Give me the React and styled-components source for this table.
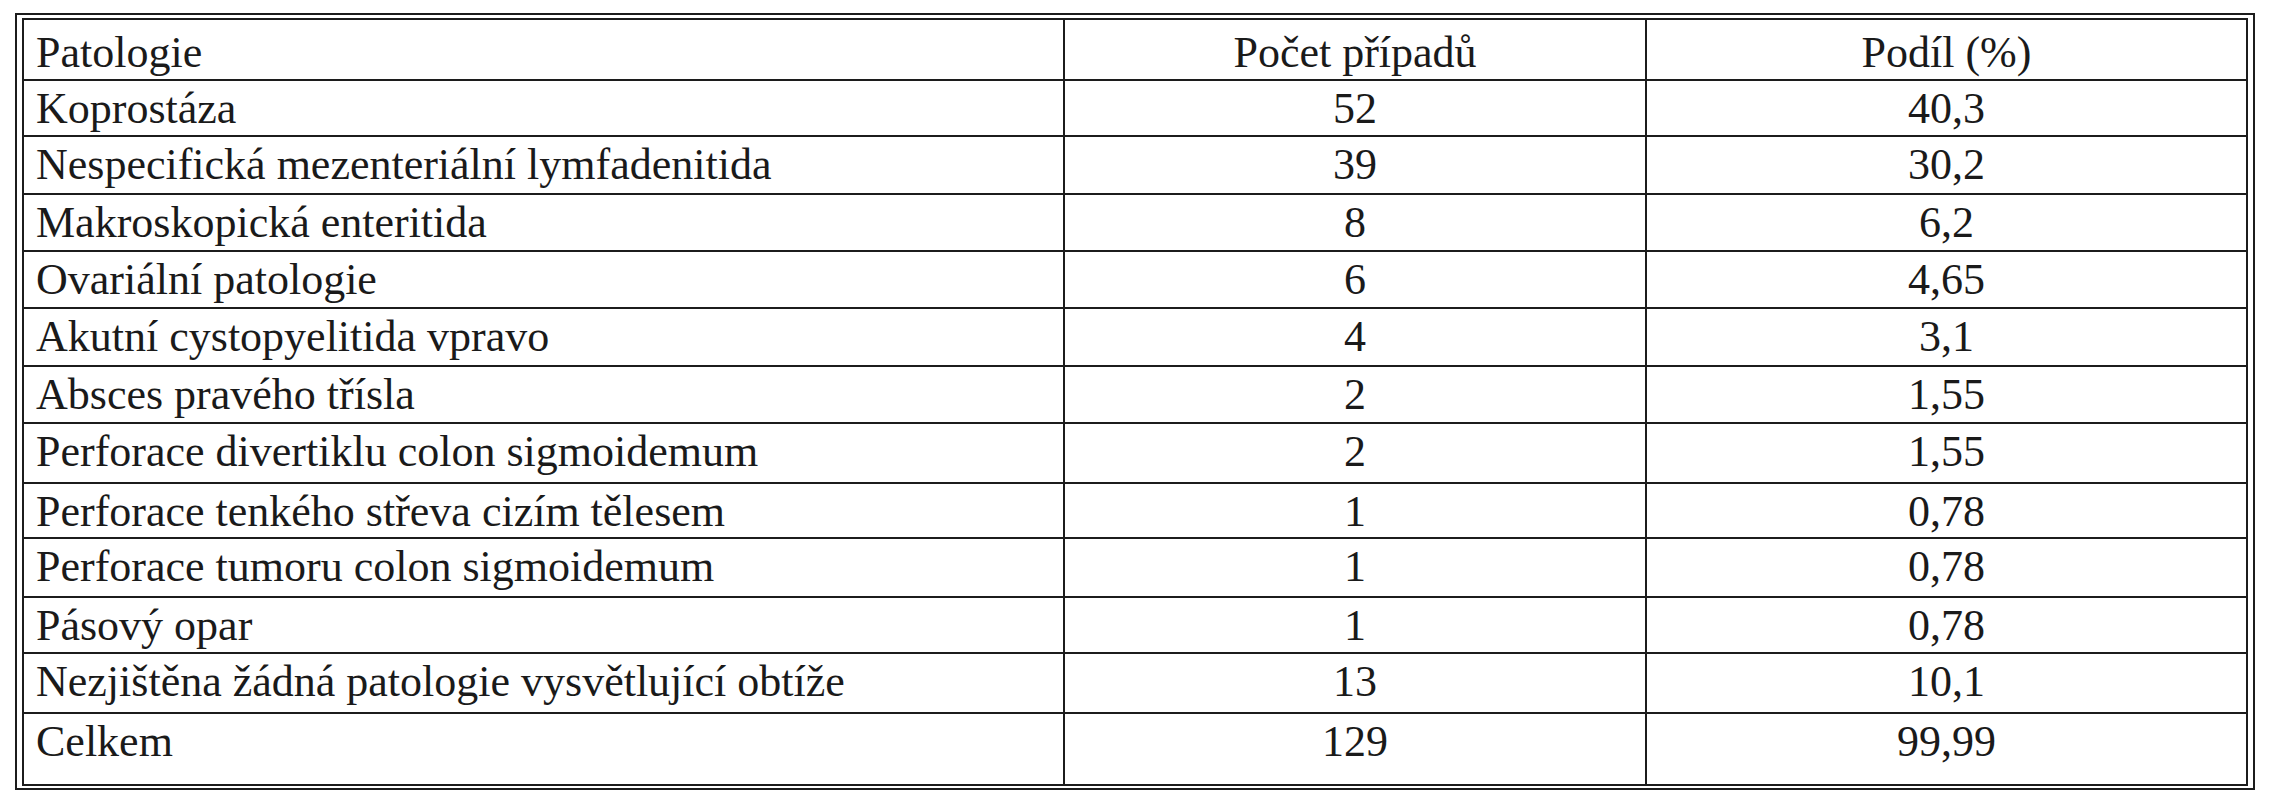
import React from "react";
import styled, { createGlobalStyle } from "styled-components";

const GlobalStyle = createGlobalStyle`
  html, body {
    margin: 0;
    padding: 0;
    background: #ffffff;
  }
  body {
    font-family: "Liberation Serif", "Times New Roman", Times, "DejaVu Serif", serif;
    color: #1a1a1a;
  }
`;

const Frame = styled.div`
  box-sizing: border-box;
  margin: 13px 0 0 15px;
  width: 2240px;
  border: 2px solid #1c1c1c;
  padding: 3px 5px 2px 5px;
  background: #fff;
`;

const Grid = styled.div`
  display: grid;
  grid-template-columns: 1041px 582px 601px;
  border-top: 2px solid #1c1c1c;
  border-left: 2px solid #1c1c1c;
`;

const Cell = styled.div`
  box-sizing: border-box;
  height: ${(p) => p.$h}px;
  border-right: 2px solid #1c1c1c;
  border-bottom: 2px solid #1c1c1c;
  padding-top: ${(p) => (p.$head ? 11 : 6)}px;
  padding-left: ${(p) => (p.$align === "left" ? "12px" : "0")};
  display: flex;
  align-items: flex-start;
  justify-content: ${(p) => (p.$align === "left" ? "flex-start" : "center")};
  font-family: "Liberation Serif", "Times New Roman", Times, "DejaVu Serif", serif;
  font-size: 44px;
  line-height: 44px;
  color: #1a1a1a;
  white-space: nowrap;
`;

const header = ["Patologie", "Počet případů", "Podíl (%)"];

const rows = [
  ["Koprostáza", "52", "40,3", 56],
  ["Nespecifická mezenteriální lymfadenitida", "39", "30,2", 58],
  ["Makroskopická enteritida", "8", "6,2", 57],
  ["Ovariální patologie", "6", "4,65", 57],
  ["Akutní cystopyelitida vpravo", "4", "3,1", 58],
  ["Absces pravého třísla", "2", "1,55", 57],
  ["Perforace divertiklu colon sigmoidemum", "2", "1,55", 60],
  ["Perforace tenkého střeva cizím tělesem", "1", "0,78", 55],
  ["Perforace tumoru colon sigmoidemum", "1", "0,78", 59],
  ["Pásový opar", "1", "0,78", 56],
  ["Nezjištěna žádná patologie vysvětlující obtíže", "13", "10,1", 60],
  ["Celkem", "129", "99,99", 72],
];

export default function App() {
  return (
    <>
      <GlobalStyle />
      <Frame>
        <Grid>
          {header.map((h, i) => (
            <Cell key={h} $h={61} $head $align={i === 0 ? "left" : "center"}>
              {h}
            </Cell>
          ))}
          {rows.map(([name, count, share, h]) => (
            <React.Fragment key={name}>
              <Cell $h={h} $align="left">{name}</Cell>
              <Cell $h={h} $align="center">{count}</Cell>
              <Cell $h={h} $align="center">{share}</Cell>
            </React.Fragment>
          ))}
        </Grid>
      </Frame>
    </>
  );
}
